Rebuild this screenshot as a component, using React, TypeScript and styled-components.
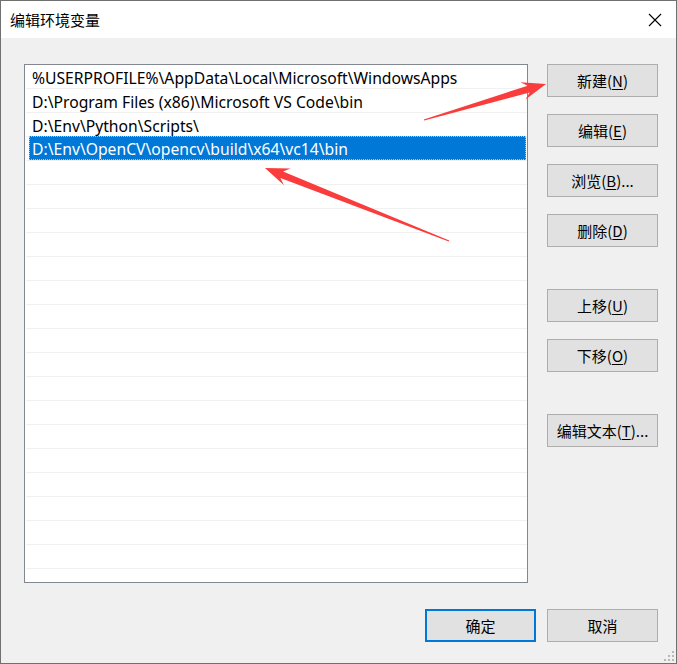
import React from "react";
import styled, { createGlobalStyle } from "styled-components";

const Global = createGlobalStyle`
  html, body { margin: 0; padding: 0; background: #ffffff; }
  body { font-family: "Noto Sans", "Noto Sans CJK SC", sans-serif; }
`;

const FONT = `"Noto Sans", "Noto Sans CJK SC", sans-serif`;

const Window = styled.div`
  position: relative;
  width: 677px;
  height: 664px;
  box-sizing: border-box;
  border: 1px solid #707070;
  background: #f0f0f0;
  display: flex;
  flex-direction: column;
  font-family: ${FONT};
  font-size: 15px;
  color: #000;
  overflow: hidden;
`;

const TitleBar = styled.div`
  height: 37px;
  flex: none;
  background: #ffffff;
  display: flex;
  align-items: center;
  justify-content: space-between;
  padding: 0 14px 0 9px;
`;

const Title = styled.span`
  font-family: "Noto Sans CJK SC", sans-serif;
  font-size: 15px;
  line-height: 1;
`;

const Close = styled.svg`
  width: 14px;
  height: 14px;
`;

const Body = styled.div`
  flex: 1;
  display: flex;
  flex-direction: column;
  padding: 26px 0 0 23px;
`;

const Main = styled.div`
  display: flex;
  gap: 19px;
`;

const List = styled.div`
  width: 504px;
  height: 519px;
  box-sizing: border-box;
  border: 1px solid #828790;
  background: #ffffff;
  overflow: hidden;
  display: flex;
  flex-direction: column;
  padding-left: 1px;
`;

const Row = styled.div`
  height: 24px;
  flex: none;
  box-sizing: border-box;
  border-bottom: 1px solid #f0f0f0;
  display: flex;
  align-items: flex-start;
  padding-left: 3px;
  white-space: nowrap;
`;

const RowText = styled.span<{ $selected?: boolean }>`
  flex: 1;
  height: 24px;
  line-height: 26px;
  box-sizing: border-box;
  padding-left: 3px;
  font-size: 15.7px;
  margin-top: ${(p) => (p.$selected ? "-1px" : "0")};
  background: ${(p) => (p.$selected ? "#0078d7" : "transparent")};
  color: ${(p) => (p.$selected ? "#ffffff" : "#000000")};
  outline: ${(p) => (p.$selected ? "1px dotted #9fc9ee" : "none")};
  outline-offset: -1px;
  margin-right: 1px;
  overflow: hidden;
`;

const Side = styled.div`
  display: flex;
  flex-direction: column;
  gap: 17px;
`;

const Button = styled.button<{ $space?: number; $default?: boolean }>`
  width: 111px;
  height: 33px;
  box-sizing: border-box;
  margin-top: ${(p) => p.$space ?? 0}px;
  background: #e1e1e1;
  border: ${(p) => (p.$default ? "2px solid #0078d7" : "1px solid #adadad")};
  font-family: "Noto Sans CJK SC", sans-serif;
  font-size: 15px;
  color: #000;
  padding: 0;
  display: flex;
  align-items: center;
  justify-content: center;
  line-height: 1;
  u { text-underline-offset: 2px; }
`;

const Footer = styled.div`
  display: flex;
  justify-content: flex-end;
  gap: 11px;
  margin-top: 26px;
  padding-right: 18px;
`;

const Overlay = styled.svg`
  position: absolute;
  left: -1px;
  top: -1px;
  width: 677px;
  height: 664px;
  pointer-events: none;
`;

const Grip = styled.svg`
  position: absolute;
  right: 2px;
  bottom: 2px;
  width: 10px;
  height: 10px;
`;

function arrowPoints(x1: number, y1: number, x2: number, y2: number) {
  const dx = x2 - x1;
  const dy = y2 - y1;
  const len = Math.hypot(dx, dy);
  const ux = dx / len;
  const uy = dy / len;
  const nx = -uy;
  const ny = ux;
  const neck = 18;
  const back = 24;
  const neckW = 3.5;
  const headW = 9;
  const p = (a: number, w: number) =>
    `${(x2 - ux * a + nx * w).toFixed(1)},${(y2 - uy * a + ny * w).toFixed(1)}`;
  return [
    `${x1 - nx * 0.6},${y1 - ny * 0.6}`,
    `${x1 + nx * 0.6},${y1 + ny * 0.6}`,
    p(neck, neckW),
    p(back, headW),
    `${x2},${y2}`,
    p(back, -headW),
    p(neck, -neckW),
  ].join(" ");
}

const Arrow = ({ x1, y1, x2, y2 }: { x1: number; y1: number; x2: number; y2: number }) => (
  <polygon points={arrowPoints(x1, y1, x2, y2)} fill="#fa3c3c" />
);

const paths = [
  "%USERPROFILE%\\AppData\\Local\\Microsoft\\WindowsApps",
  "D:\\Program Files (x86)\\Microsoft VS Code\\bin",
  "D:\\Env\\Python\\Scripts\\",
  "D:\\Env\\OpenCV\\opencv\\build\\x64\\vc14\\bin",
];

export default function App() {
  const rows = Array.from({ length: 22 }, (_, i) => paths[i] ?? "");
  return (
    <>
      <Global />
      <Window>
        <TitleBar>
          <Title>编辑环境变量</Title>
          <Close viewBox="0 0 14 14">
            <path d="M1 1 L13 13 M13 1 L1 13" stroke="#000" strokeWidth="1.1" />
          </Close>
        </TitleBar>
        <Body>
          <Main>
            <List>
              {rows.map((t, i) => (
                <Row key={i}>
                  <RowText $selected={i === 3}>{t}</RowText>
                </Row>
              ))}
            </List>
            <Side>
              <Button>新建(<u>N</u>)</Button>
              <Button>编辑(<u>E</u>)</Button>
              <Button>浏览(<u>B</u>)...</Button>
              <Button>删除(<u>D</u>)</Button>
              <Button $space={25}>上移(<u>U</u>)</Button>
              <Button>下移(<u>O</u>)</Button>
              <Button $space={25}>编辑文本(<u>T</u>)...</Button>
            </Side>
          </Main>
          <Footer>
            <Button $default>确定</Button>
            <Button>取消</Button>
          </Footer>
        </Body>
        <Overlay viewBox="0 0 677 664">
          <Arrow x1={424} y1={120} x2={546} y2={84} />
          <Arrow x1={449} y1={241} x2={265} y2={168} />
        </Overlay>
        <Grip viewBox="0 0 10 10">
          {[
            [8, 0],
            [4, 4],
            [8, 4],
            [0, 8],
            [4, 8],
            [8, 8],
          ].map(([x, y], i) => (
            <rect key={i} x={x} y={y} width="2" height="2" fill="#b8b8b8" />
          ))}
        </Grip>
      </Window>
    </>
  );
}
